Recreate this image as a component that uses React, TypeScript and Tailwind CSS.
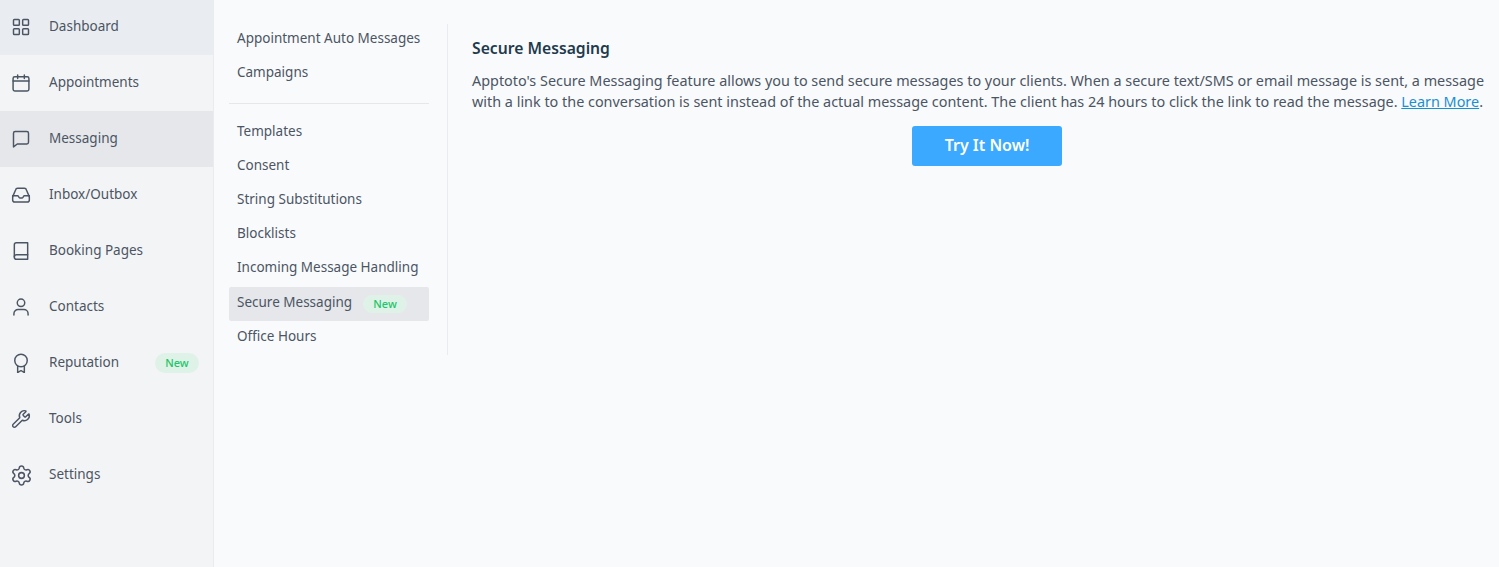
import type { ReactNode } from "react";
import { LayoutGrid, Settings, Wrench } from "lucide-react";

const Icon = ({ children }: { children: ReactNode }) => (
  <svg viewBox="0 0 24 24" width={20} height={20} fill="none" stroke="currentColor" strokeWidth={1.75} strokeLinecap="round" strokeLinejoin="round" className="shrink-0">
    {children}
  </svg>
);

const navItems = [
  { label: "Dashboard", icon: <LayoutGrid size={20} strokeWidth={1.75} className="shrink-0" />, bg: "bg-[#e9ecf0]" },
  {
    label: "Appointments",
    icon: (
      <Icon>
        <rect x="2.500" y="4.500" width="19" height="17" rx="2" />
        <path d="M2.500 9.500h19M8 2.500v4M16 2.500v4" />
      </Icon>
    ),
  },
  {
    label: "Messaging",
    icon: (
      <Icon>
        <path d="M3 21.500V5a2 2 0 0 1 2-2h14a2 2 0 0 1 2 2v11a2 2 0 0 1-2 2H7.500L3 21.500z" />
      </Icon>
    ),
    bg: "bg-[#e5e7eb]",
  },
  {
    label: "Inbox/Outbox",
    icon: (
      <Icon>
        <path d="M2 14v4a2.500 2.500 0 0 0 2.500 2.500h15A2.500 2.500 0 0 0 22 18v-4" />
        <path d="M2 14 5.500 6A2.500 2.500 0 0 1 8 4h8a2.500 2.500 0 0 1 2.500 2L22 14" />
        <path d="M2 13h6c1 0 1.500 2.500 2.500 2.500h3c1 0 1.500-2.500 2.500-2.500h6" />
      </Icon>
    ),
  },
  {
    label: "Booking Pages",
    icon: (
      <Icon>
        <path d="M4 19.500V4.500A2.500 2.500 0 0 1 6.500 2H20v20H6.500A2.500 2.500 0 0 1 4 19.500z" />
        <path d="M4 19a2.500 2.500 0 0 1 2.500-2.500H20" />
      </Icon>
    ),
  },
  {
    label: "Contacts",
    icon: (
      <Icon>
        <circle cx="12" cy="7" r="4.500" />
        <path d="M3.500 21.500V20a5 5 0 0 1 5-5h7a5 5 0 0 1 5 5v1.500" />
      </Icon>
    ),
  },
  {
    label: "Reputation",
    icon: (
      <Icon>
        <circle cx="12" cy="9" r="7.500" />
        <path d="M8 15.500v8l4-2.500 4 2.500v-8" />
      </Icon>
    ),
    badge: true,
  },
  { label: "Tools", icon: <Wrench size={20} strokeWidth={1.75} className="shrink-0" /> },
  { label: "Settings", icon: <Settings size={23} strokeWidth={1.6} className="-mx-[1.5px] shrink-0" /> },
];

const NewBadge = ({ small }: { small?: boolean }) => (
  <span className={`flex w-[44px] items-center justify-center rounded-full bg-[#dff2e8] text-[11px] font-medium text-[#22c569] ${small ? "h-[18px]" : "h-[20px]"}`}>
    New
  </span>
);

const SubLink = ({ label, active, badge, low }: { label: string; active?: boolean; badge?: boolean; low?: boolean }) => (
  <div className={`flex h-[34px] items-center gap-[11px] rounded-[2px] pl-2 ${active ? "bg-[#e5e7eb]" : ""}`}>
    <span className={low ? "mb-[3px]" : "mb-[5px]"}>{label}</span>
    {badge && <NewBadge small />}
  </div>
);

export default function App() {
  return (
    <div
      className="flex h-[567px] w-[1499px] overflow-hidden bg-[#f9fafc] text-[#4b5563]"
      style={{ fontFamily: '"Noto Sans", sans-serif' }}
    >
      <aside className="h-full w-[214px] shrink-0 border-r border-[#e9ebee] bg-[#f3f4f6]">
        <div className="-mt-[1px] flex flex-col">
          {navItems.map((item) => (
            <div key={item.label} className={`flex h-[56px] items-center pr-[14px] pl-[11px] text-[13.5px] ${item.bg ?? ""}`}>
              {item.icon}
              <span className="mb-[2px] ml-[18px] grow">{item.label}</span>
              {item.badge && <NewBadge />}
            </div>
          ))}
        </div>
      </aside>

      <nav className="mt-[24px] ml-[15px] h-[331px] w-[219px] shrink-0 border-r border-[#e9ebee] pr-[18px] text-[13.5px]">
        <SubLink label="Appointment Auto Messages" />
        <SubLink label="Campaigns" />
        <div className="mt-[11px] mb-[13px] border-t border-[#e5e7eb]" />
        <SubLink label="Templates" />
        <SubLink label="Consent" />
        <SubLink label="String Substitutions" />
        <SubLink label="Blocklists" />
        <SubLink label="Incoming Message Handling" />
        <SubLink label="Secure Messaging" active badge low />
        <SubLink label="Office Hours" low />
      </nav>

      <main className="ml-[24px] w-[1030px] shrink-0 pt-[37px]">
        <h1 className="text-[15.7px] leading-[22px] font-semibold text-[#1f3a4d]">Secure Messaging</h1>
        <p className="mt-[11px] text-[14.4px] leading-[21px]">
          Apptoto's Secure Messaging feature allows you to send secure messages to your clients. When a secure text/SMS or email message is sent, a message with a link to the conversation is sent instead of the actual message content. The client has 24 hours to click the link to read the message.{" "}
          <a className="text-[#1a8fd1] underline">Learn More</a>.
        </p>
        <div className="mt-[14px] flex justify-center">
          <button className="h-[40px] w-[150px] rounded-[3px] bg-[#3ba9ff] pb-[2px] text-[16px] font-semibold text-white">Try It Now!</button>
        </div>
      </main>
    </div>
  );
}
